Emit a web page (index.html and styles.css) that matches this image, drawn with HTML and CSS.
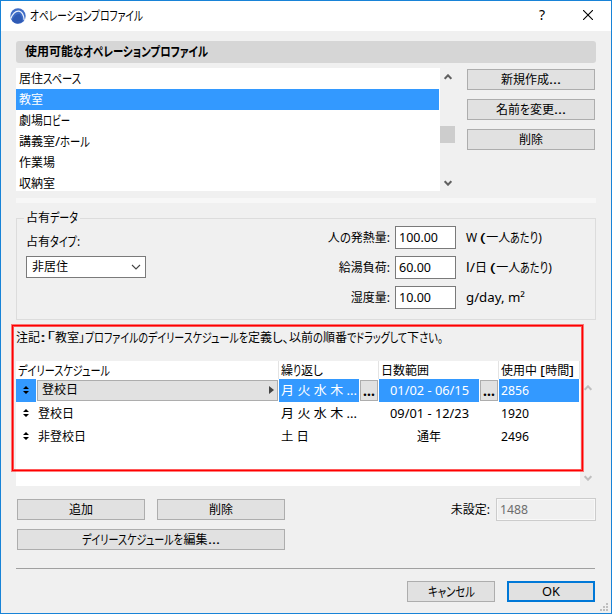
FILE: index.html
```html
<!DOCTYPE html>
<html lang="ja">
<head>
<meta charset="utf-8">
<title>オペレーションプロファイル</title>
<link rel="stylesheet" href="styles.css">
</head>
<body>
<div class="window">
  <header class="titlebar">
    <svg class="app-icon" width="16" height="16" viewBox="0 0 16 16"><circle cx="8" cy="8" r="7.700" fill="#3f6cc6"/><path d="M.8 10.500C3 5 6 2.800 9 3.200C12 3.800 13.800 8 14.200 12" fill="none" stroke="#e8effc" stroke-width="1.300"/><path d="M2 12.500C4 8 6.500 5.500 9.500 6C11.500 8 12 10 12.500 13.500Q8 17 4 14.500Z" fill="#2f5ab4"/></svg>
    <span class="title"><span class="k" data-w="113">オペレーションプロファイル</span></span>
    <span class="help">?</span>
    <svg class="close" width="10" height="10" viewBox="0 0 10 10"><path d="M0 0L10 10M10 0L0 10" stroke="#000" stroke-width="1.100"/></svg>
  </header>
  <main>
    <h1 class="section"><span class="k" data-w="48">使用可能</span><span class="k" data-w="135">なオペレーションプロファイル</span></h1>
    <section class="profiles">
      <ul class="list">
        <li>居住<span class="k" data-w="38">スペース</span></li>
        <li class="selected">教室</li>
        <li>劇場<span class="k" data-w="27">ロビー</span></li>
        <li>講義室<span class="k" data-w="5">/</span><span class="k" data-w="30">ホール</span></li>
        <li>作業場</li>
        <li>収納室</li>
      </ul>
      <div class="scroll">
        <svg width="8" height="6" viewBox="0 0 8 6"><path d="M.7 4.800L4 1.300L7.300 4.800" /></svg>
        <i class="thumb"></i>
        <svg width="8" height="6" viewBox="0 0 8 6"><path d="M.7 1.200L4 4.700L7.300 1.200" /></svg>
      </div>
      <div class="actions">
        <button>新規作成<span class="k" data-w="12">...</span></button>
        <button>名前<span class="k" data-w="10">を</span>変更<span class="k" data-w="12">...</span></button>
        <button>削除</button>
      </div>
    </section>
    <div class="splitter"></div>
    <fieldset class="group">
      <legend>占有<span class="k" data-w="28">データ</span></legend>
      <div class="type">
        <label>占有<span class="k" data-w="27">タイプ</span>:</label>
        <div class="select">非居住<svg width="10" height="6" viewBox="0 0 10 6"><path d="M1 1L5 5L9 1"/></svg></div>
      </div>
      <div class="values">
        <label>人<span class="k" data-w="11">の</span>発熱量:</label><div class="input"><span class="k" data-w="39">100.00</span></div><span>W <span class="k" data-w="6">(</span>一人<span class="k" data-w="28">あたり</span>)</span>
        <label>給湯負荷:</label><div class="input"><span class="k" data-w="32">60.00</span></div><span><span class="k" data-w="9">l/</span>日 <span class="k" data-w="6">(</span>一人<span class="k" data-w="28">あたり</span>)</span>
        <label>湿度量:</label><div class="input"><span class="k" data-w="32">10.00</span></div><span><span class="k" data-w="59">g/day, m²</span></span>
      </div>
    </fieldset>
    <p class="note">注記<span class="k" data-w="6">:</span><span class="k" data-w="9">「</span>教室<span class="k" data-w="6">」</span><span class="k" data-w="163">プロファイルのデイリースケジュールを</span>定義<span class="k" data-w="17">し、</span>以前<span class="k" data-w="10">の</span>順番<span class="k" data-w="60">でドラッグして</span>下<span class="k" data-w="24">さい。</span></p>
    <section class="schedule">
      <div class="table">
        <div class="row head">
          <span class="c1"><span class="k" data-w="92">デイリースケジュール</span></span>
          <span class="c2">繰<span class="k" data-w="8">り</span>返<span class="k" data-w="10">し</span></span>
          <span class="c3">日数範囲</span>
          <span class="c4">使用中 <span class="k" data-w="5">[</span>時間<span class="k" data-w="5">]</span></span>
        </div>
        <div class="row active">
          <span class="grab"><svg width="6" height="8" viewBox="0 0 6 8"><path d="M3 0L6 3H0ZM3 8L0 5H6Z"/></svg></span>
          <button class="name">登校日<svg width="5" height="8" viewBox="0 0 5 8"><path d="M0 0L5 4L0 8Z"/></svg></button>
          <span class="days"><span class="k" data-w="76">月 火 水 木 ...</span></span><button class="more">...</button>
          <span class="range"><span class="k" data-w="79">01/02 - 06/15</span></span><button class="more">...</button>
          <span class="hours"><span class="k" data-w="28">2856</span></span>
        </div>
        <div class="row">
          <span class="grab"><svg width="6" height="8" viewBox="0 0 6 8"><path d="M3 0L6 3H0ZM3 8L0 5H6Z"/></svg></span>
          <span class="name">登校日</span>
          <span class="days"><span class="k" data-w="76">月 火 水 木 ...</span></span><i></i>
          <span class="range"><span class="k" data-w="79">09/01 - 12/23</span></span><i></i>
          <span class="hours"><span class="k" data-w="28">1920</span></span>
        </div>
        <div class="row">
          <span class="grab"><svg width="6" height="8" viewBox="0 0 6 8"><path d="M3 0L6 3H0ZM3 8L0 5H6Z"/></svg></span>
          <span class="name">非登校日</span>
          <span class="days"><span class="k" data-w="28">土 日</span></span><i></i>
          <span class="range">通年</span><i></i>
          <span class="hours"><span class="k" data-w="28">2496</span></span>
        </div>
      </div>
      <div class="scroll faded">
        <svg width="8" height="6" viewBox="0 0 8 6"><path d="M.7 4.800L4 1.300L7.300 4.800" /></svg>
        <svg width="8" height="6" viewBox="0 0 8 6"><path d="M.7 1.200L4 4.700L7.300 1.200" /></svg>
      </div>
    </section>
    <section class="edit">
      <div class="edit-buttons">
        <button>追加</button>
        <button>削除</button>
        <button class="wide"><span class="k" data-w="101">デイリースケジュールを</span>編集<span class="k" data-w="12">...</span></button>
      </div>
      <div class="unset"><label>未設定:</label><div class="input disabled"><span class="k" data-w="28">1488</span></div></div>
    </section>
    <footer>
      <button><span class="k" data-w="47">キャンセル</span></button>
      <button class="default"><span class="k" data-w="18">OK</span></button>
    </footer>
  </main>
  <div class="highlight"></div>
  <svg class="grip" width="8" height="8" viewBox="0 0 8 8"><path d="M6 0h2v2h-2zM3 3h2v2h-2zM6 3h2v2h-2zM0 6h2v2h-2zM3 6h2v2h-2zM6 6h2v2h-2z"/></svg>
</div>
<script src="fit.js"></script>
</body>
</html>
```
FILE: styles.css
```css
* { box-sizing: border-box; }
body {
  margin: 0;
  font: 12px/20px "Noto Sans", "Noto Sans CJK JP", sans-serif;
  color: #000;
}
/* Text runs condensed to a set width, as in a narrow UI face */
.k {
  display: inline-block;
  white-space: pre;
  transform-origin: 0 50%;
  font-feature-settings: "palt";
  text-align: left;
}
.kana { font-size: 13px; line-height: 16px; }
.window {
  position: relative;
  width: 612px;
  height: 614px;
  border: 1px solid #1883d7;
  background: #f0f0f0;
  overflow: hidden;
}
.titlebar {
  display: flex;
  align-items: center;
  height: 30px;
  padding: 0 18px 0 9px;
  background: #fff;
}
.app-icon { margin-top: -1px; }
.title { flex: 1; padding-left: 4px; height: 20px; }
.help { width: 10px; margin: -2px 33px 0 0; padding-left: 1px; font-size: 14px; }
.help + .close { margin-left: 2px; }
.close { margin-top: -2px; }
main { padding: 10px 15px 0; }
.section {
  margin: 0;
  height: 22px;
  padding-left: 9px;
  border-radius: 3px;
  background: #d6d6d6;
  font-size: 12px;
  line-height: 21px;
  white-space: nowrap;
}
.profiles { display: flex; height: 123px; margin-top: 5px; }
.list {
  width: 424px;
  margin: 0;
  padding: 0 1px 0 0;
  list-style: none;
  background: #fff;
  line-height: 21px;
}
.list li { height: 21px; padding-left: 3px; }
.list .selected { background: #3399ff; color: #fff; }
.scroll {
  display: flex;
  flex-direction: column;
  align-items: center;
  width: 15px;
  padding: 6px 0 5px;
}
.scroll path { fill: none; stroke: #606060; stroke-width: 2; }
.thumb { width: 15px; height: 17px; margin: 46px 0 37px; background: #cdcdcd; }
.scroll.faded { justify-content: space-between; padding: 24px 0 5px; }
.faded path { stroke: #bfbfbf; }
button {
  display: block;
  height: 21px;
  padding: 0;
  border: 1px solid #adadad;
  background: #e1e1e1;
  color: #000;
  font: inherit;
  line-height: 19px;
  white-space: nowrap;
}
.actions { display: grid; gap: 9px; align-content: start; width: 128px; margin: 1px 0 0 12px; }
.splitter { height: 5px; margin-top: 7px; background: #f7f7f7; }
.group {
  display: flex;
  justify-content: space-between;
  height: 112px;
  margin: 5px 0 0;
  padding: 0 20px 0 9px;
  border: 1px solid #dcdcdc;
  white-space: nowrap;
}
legend { height: 20px; margin-left: -2px; padding: 0 2px; line-height: 20px; }
.type { width: 120px; padding-top: 4px; }
.type label { display: block; height: 24px; }
.select {
  display: flex;
  align-items: center;
  justify-content: space-between;
  height: 22px;
  padding: 0 4px 1px 5px;
  border: 1px solid #7a7a7a;
  background: #fff;
}
.select path { fill: none; stroke: #444; stroke-width: 1.100; }
.values {
  display: grid;
  grid-template-columns: 80px 61px 120px;
  grid-auto-rows: 23px;
  row-gap: 7px;
  line-height: 23px;
  margin: -2px -1px 0 0;
}
.values label { text-align: right; padding-right: 5px; }
.values > span { padding-left: 10px; }
.input {
  height: 23px;
  padding-left: 3px;
  border: 1px solid #7a7a7a;
  background: #fff;
  line-height: 21px;
}
.note { margin: 8px 0 0; height: 20px; white-space: nowrap; }
.schedule { display: flex; height: 125px; margin-top: 13px; }
.table { width: 564px; background: #fff; }
.row {
  display: grid;
  grid-template-columns: 20px 243px 80px 20px 100px 20px 80px;
  height: 23px;
  line-height: 23px;
  white-space: nowrap;
}
.row.head { grid-template-columns: 263px 100px 120px 81px; height: 18px; line-height: 20px; }
.head > span { height: 18px; padding-left: 2px; border-right: 1px solid #e3e3e3; }
.grab { display: flex; align-items: center; justify-content: center; padding-bottom: 1px; }
.name { padding-left: 2px; }
.days { padding-left: 2px; }
.range { text-align: center; }
.hours { padding-left: 2px; }
.active > span { background: #3399ff; color: #fff; }
.active button { align-self: center; margin: 0 1px; }
button.name {
  display: flex;
  align-items: center;
  justify-content: space-between;
  padding: 0 3px 2px 4px;
}
.name path { fill: #444; }
button.more { font-size: 14px; font-weight: 700; line-height: 15px; }
.edit { display: flex; justify-content: space-between; height: 82px; }
.edit-buttons {
  display: grid;
  grid-template-columns: 128px 128px;
  gap: 9px 12px;
  align-content: start;
  padding: 13px 0 0 1px;
}
.wide { grid-column: span 2; }
.unset { display: flex; gap: 6px; padding-top: 12px; line-height: 23px; }
.unset .input { width: 100px; line-height: 21px; }
.input.disabled { border-color: #ccc; color: #6d6d6d; background: #f0f0f0; box-shadow: inset 0 0 0 1px #f8f8f8; }
footer {
  display: flex;
  justify-content: flex-end;
  gap: 12px;
  margin-right: 1px;
  padding-top: 12px;
  border-top: 1px solid #a0a0a0;
}
footer button { width: 88px; }
footer .default { border: 2px solid #0078d7; line-height: 17px; }
/* Callout frame over the schedule area */
.highlight {
  position: absolute;
  left: 11px;
  top: 324px;
  width: 571px;
  height: 146px;
  border: 1px solid #f00;
  box-shadow: 0 0 0 1px rgba(255, 0, 0, .5), inset 0 0 0 1px rgba(255, 0, 0, .65);
}
.grip { position: absolute; right: 3px; bottom: 2px; fill: #bfbfbf; }
```
FILE: fit.js
```js
// Condense each run to the width given in data-w; kana are drawn slightly taller
document.querySelectorAll('.k').forEach(function (el) {
  if (/[ぁ-んァ-ヶ]/.test(el.textContent)) el.classList.add('kana');
  var natural = el.getBoundingClientRect().width;
  var width = Number(el.dataset.w);
  el.style.width = width + 'px';
  el.style.transform = 'scaleX(' + width / natural + ')';
});
```
